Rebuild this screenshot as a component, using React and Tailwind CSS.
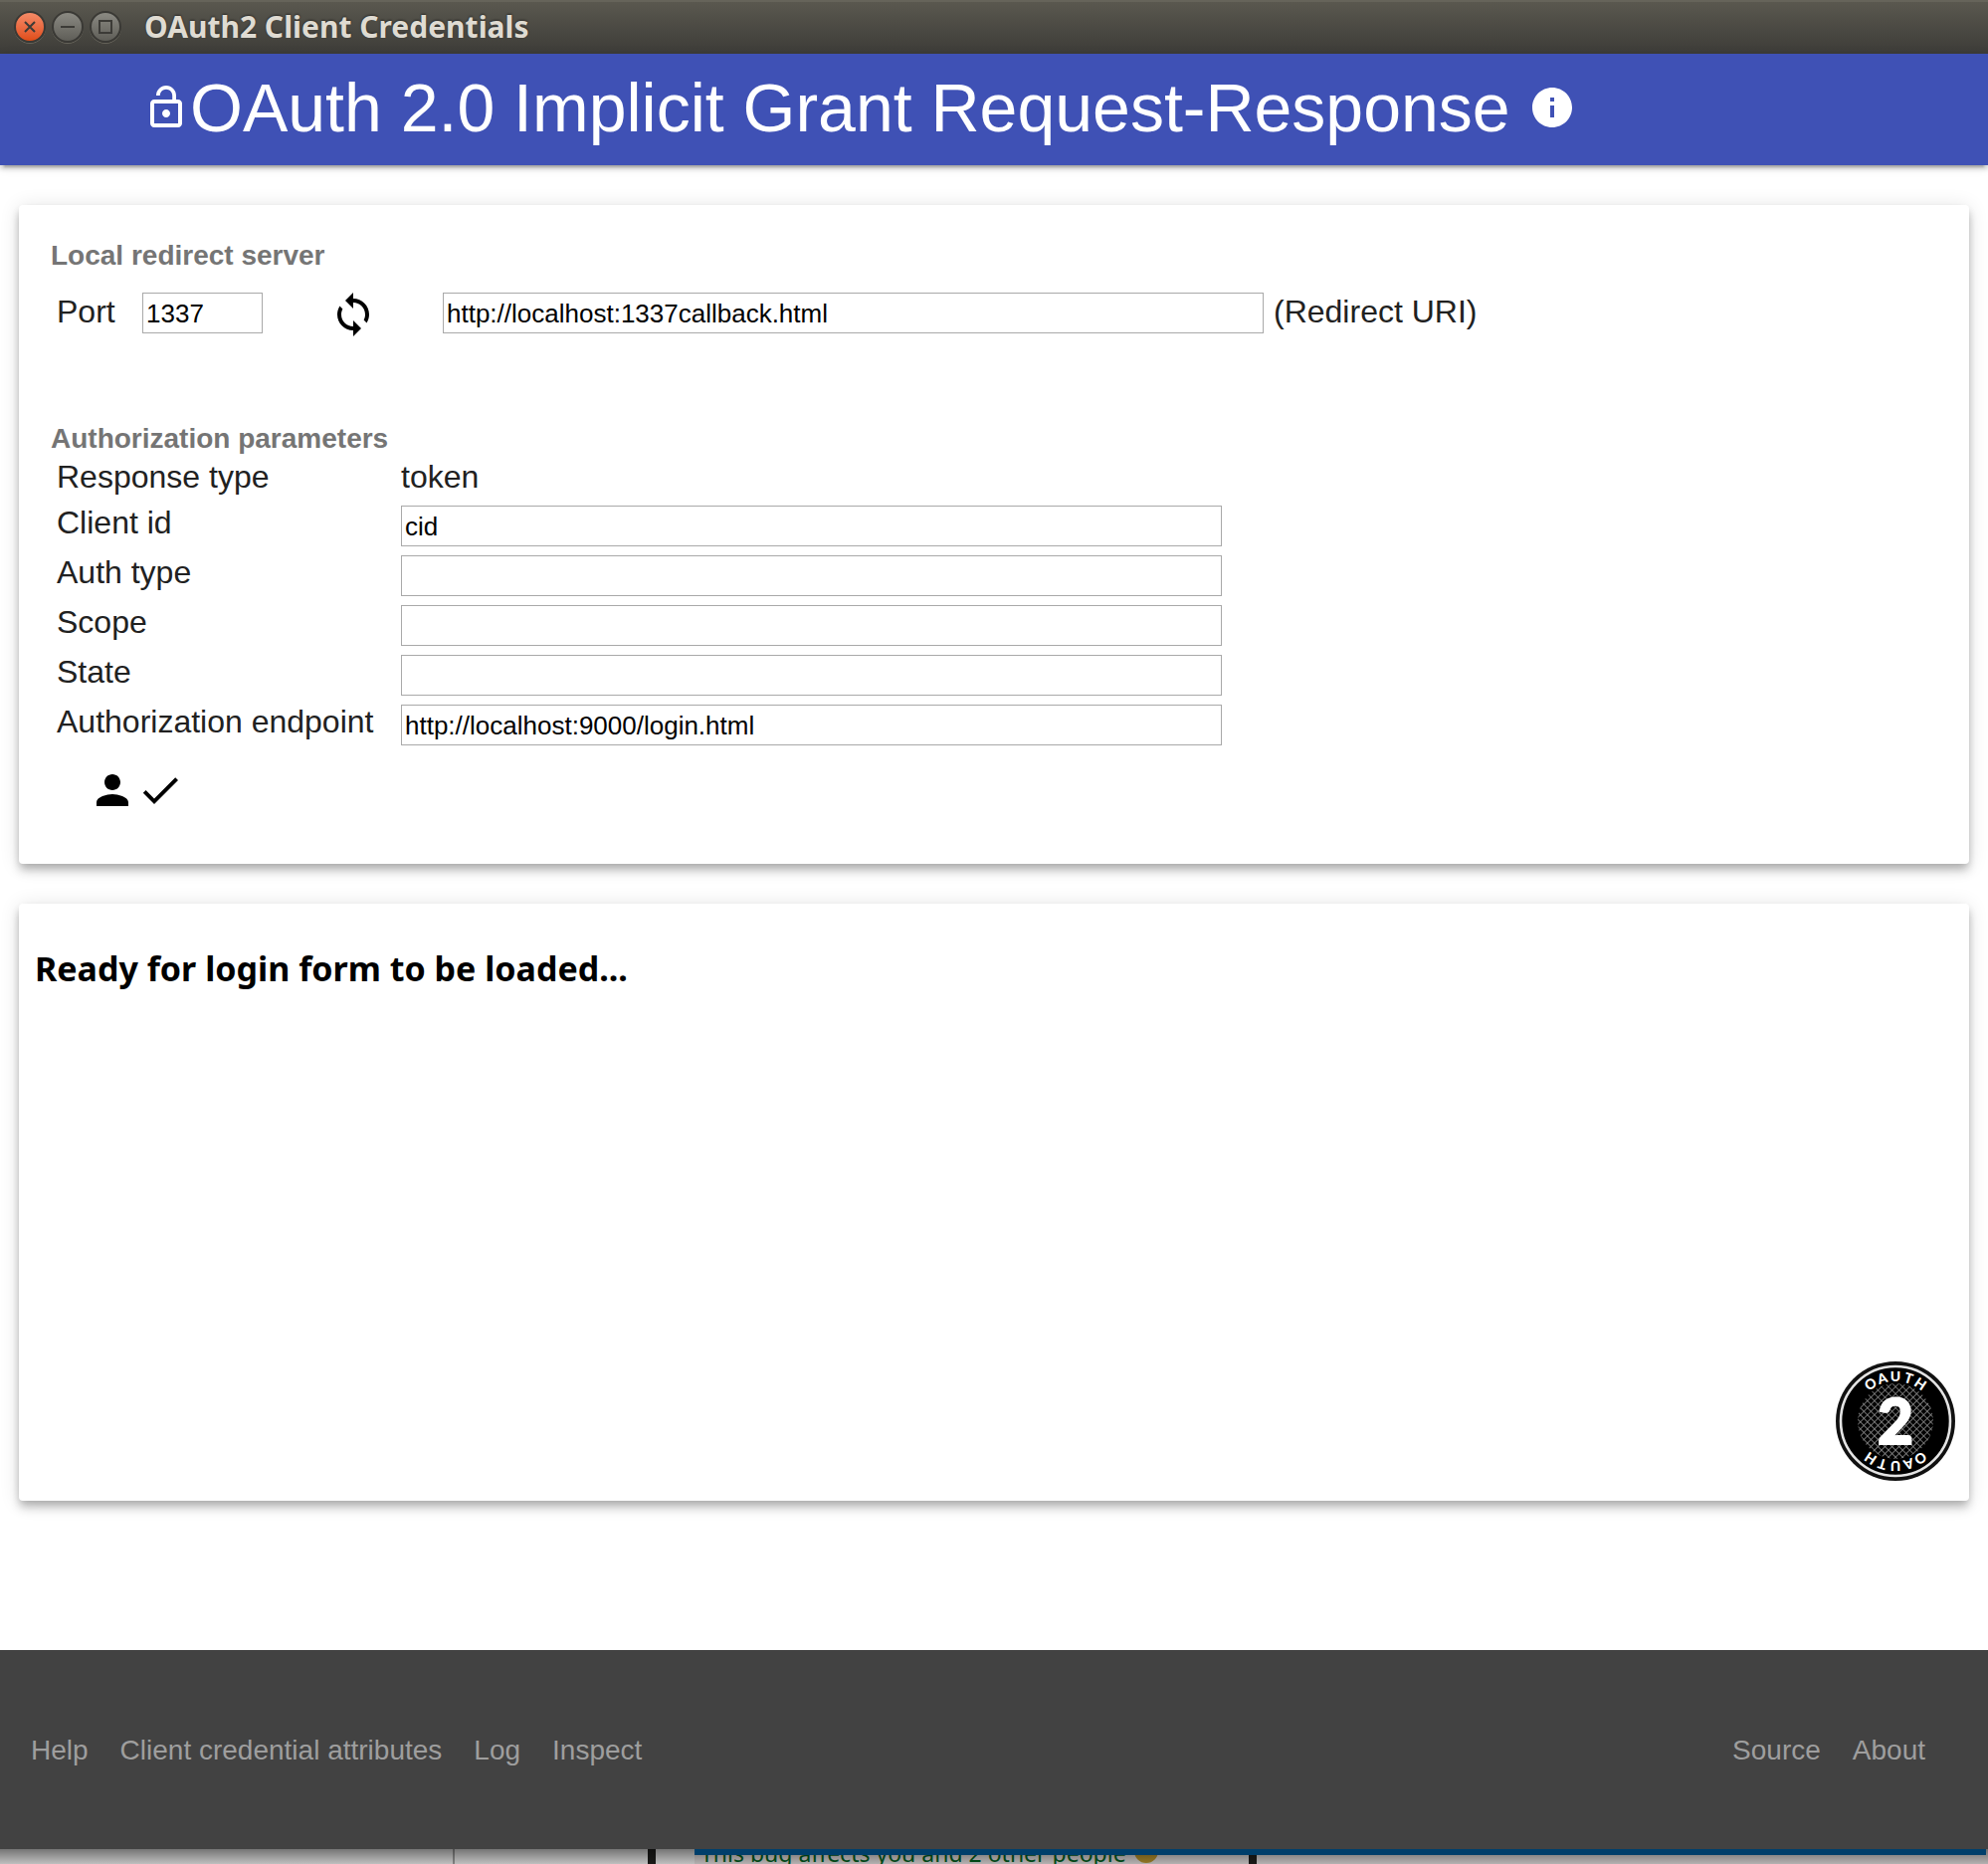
import React from "react";

const PATHS = {
  lockOpen:
    "M12 17c1.1 0 2-.9 2-2s-.9-2-2-2-2 .9-2 2 .9 2 2 2zm6-9H8.9V8h6.2V6c0-1.71-1.39-3.1-3.1-3.1-1.71 0-3.1 1.39-3.1 3.1H7c0-2.76 2.24-5 5-5s5 2.24 5 5v2h1c1.1 0 2 .9 2 2v10c0 1.1-.9 2-2 2H6c-1.1 0-2-.9-2-2V10c0-1.1.9-2 2-2h12zm0 12V10H6v10h12z",
  info: "M12 2C6.48 2 2 6.48 2 12s4.48 10 10 10 10-4.48 10-10S17.52 2 12 2zm1 15h-2v-6h2v6zm0-8h-2V7h2v2z",
  sync: "M12 4V1L8 5l4 4V6c3.31 0 6 2.69 6 6 0 1.01-.25 1.97-.7 2.8l1.46 1.46C19.54 15.03 20 13.57 20 12c0-4.42-3.58-8-8-8zm0 14c-3.31 0-6-2.69-6-6 0-1.01.25-1.97.7-2.8L5.24 7.74C4.46 8.97 4 10.43 4 12c0 4.42 3.58 8 8 8v3l4-4-4-4v3z",
  person:
    "M12 12c2.21 0 4-1.79 4-4s-1.79-4-4-4-4 1.79-4 4 1.79 4 4 4zm0 2c-2.67 0-8 1.34-8 4v2h16v-2c0-2.66-5.33-4-8-4z",
  done: "M9 16.2L4.8 12l-1.4 1.4L9 19 21 7l-1.4-1.4L9 16.2z",
};

function Icon({ name }) {
  return (
    <svg viewBox="0 0 24 24" className="size-12 shrink-0 fill-current" aria-hidden="true">
      <path d={PATHS[name]} />
    </svg>
  );
}

function IconButton({ name, label }) {
  return (
    <button type="button" aria-label={label} className="size-12 shrink-0">
      <Icon name={name} />
    </button>
  );
}

function WindowButton({ label, close, children }) {
  return (
    <button
      type="button"
      aria-label={label}
      className={
        "size-8 rounded-full border-2 border-[#3a3935] shadow-[0_1px_0_#66645a] " +
        (close ? "bg-linear-to-b from-[#f58a66] to-[#df4c16]" : "bg-linear-to-b from-[#8b8a83] to-[#5f5e58]")
      }
    >
      <svg viewBox="0 0 28 28" className="size-7 fill-none stroke-[#3c3b37] stroke-2" aria-hidden="true">
        {children}
      </svg>
    </button>
  );
}

function TitleBar() {
  return (
    <div className="flex h-[54px] items-center gap-[23px] border-t-2 border-[#66645a] bg-linear-to-b from-[#5a584f] to-[#3d3c38] pb-[2px] pl-[14px]">
      <div className="flex gap-[6px]">
        <WindowButton label="Close" close>
          <path d="M9 9l10 10M19 9L9 19" />
        </WindowButton>
        <WindowButton label="Minimize">
          <path d="M7 14h14" />
        </WindowButton>
        <WindowButton label="Maximize">
          <path d="M8 8h12v12H8z" />
        </WindowButton>
      </div>
      <span className="font-['Noto_Sans',sans-serif] text-[30px] leading-9 font-bold text-[#dfdbd2] [text-shadow:0_-1px_2px_#2b2a27]">
        OAuth2 Client Credentials
      </span>
    </div>
  );
}

const inputClass =
  "block h-[41px] border border-[#a9a9a9] bg-white pt-[2px] pl-[3px] text-[26px] leading-8 text-black outline-none";
const cardClass =
  "rounded-[4px] bg-white shadow-[0_8px_10px_0_rgba(0,0,0,0.14),0_2px_20px_0_rgba(0,0,0,0.12),0_4px_8px_-2px_rgba(0,0,0,0.2)]";

function Field({ id, label, value }) {
  return (
    <>
      <label htmlFor={id} className="h-[50px] leading-9">
        {label}
      </label>
      <div className="h-[50px] pt-px">
        <input id={id} type="text" defaultValue={value} className={inputClass + " w-full"} />
      </div>
    </>
  );
}

const LETTERS = [
  ["O", -34],
  ["A", -17],
  ["U", 0],
  ["T", 17],
  ["H", 34],
];

function OAuthBadge() {
  return (
    <svg viewBox="0 0 120 120" className="size-[120px]" role="img" aria-label="OAuth 2">
      <defs>
        <pattern id="mesh" width="5" height="5" patternUnits="userSpaceOnUse" patternTransform="rotate(45)">
          <path d="M0 0H5M0 0V5" stroke="#8f8f8f" strokeWidth="1.6" fill="none" />
        </pattern>
      </defs>
      <circle cx="60" cy="60" r="60" fill="#111" />
      <circle cx="60" cy="60" r="55" fill="#000" stroke="#e4e4e4" strokeWidth="2.6" />
      <circle cx="60" cy="60" r="38" fill="url(#mesh)" />
      {[0, 180].map((turn) => (
        <g key={turn} transform={`rotate(${turn} 60 60)`}>
          {LETTERS.map(([letter, angle]) => (
            <text
              key={letter}
              x="60"
              y="20"
              transform={`rotate(${angle} 60 60)`}
              textAnchor="middle"
              className="fill-white font-['Lato',sans-serif] text-[14px] font-black"
            >
              {letter}
            </text>
          ))}
        </g>
      ))}
      <text
        x="60"
        y="83"
        textAnchor="middle"
        className="fill-white stroke-white stroke-2 font-['Lato',sans-serif] text-[62px] font-black"
      >
        2
      </text>
    </svg>
  );
}

function Backdrop() {
  return (
    <div className="relative flex h-[15px] overflow-hidden text-[#00551b]" aria-hidden="true">
      <div className="w-[455px] bg-[#d4d4d4]" />
      <div className="w-[2px] bg-[#8f8f8f]" />
      <div className="w-[194px] bg-[#d4d4d4]" />
      <div className="w-2 bg-[#1c1c1a]" />
      <div className="w-[39px] bg-[#d4d4d4]" />
      <div className="relative flex-1 overflow-hidden bg-[#c8c4c4]">
        <div className="absolute bottom-[-5px] left-[6px] flex items-center gap-2 whitespace-nowrap font-['Noto_Sans',sans-serif] text-[23px] leading-8">
          This bug affects you and 2 other people
          <span className="mb-1 size-6 rounded-full bg-[#a5852a]" />
        </div>
        <div className="absolute top-[6px] bottom-0 left-[557px] w-2 bg-[#1c1c1a]" />
      </div>
      <div className="absolute inset-0 bg-linear-to-b from-black/45 to-black/10" />
      <div className="absolute top-0 right-[2px] left-[698px] h-[6px] bg-[#003f6b]" />
    </div>
  );
}

export default function App() {
  return (
    <div className="flex min-h-screen flex-col bg-white font-['Liberation_Sans',sans-serif]">
      <TitleBar />
      <header className="z-10 flex h-28 items-center bg-[#3f51b5] pb-1 pl-[143px] text-white shadow-[0_4px_4px_0_rgba(0,0,0,0.14),0_6px_2px_-4px_rgba(0,0,0,0.2),0_2px_10px_0_rgba(0,0,0,0.12)]">
        <Icon name="lockOpen" />
        <h1 className="mr-[18px] text-[68px] leading-[80px]">OAuth 2.0 Implicit Grant Request-Response</h1>
        <IconButton name="info" label="Information" />
      </header>

      <main className="flex-1 px-[19px] pt-10 pb-[150px]">
        <form className={cardClass + " px-8 pt-[33px] pb-[50px] text-[32px] text-[#212121]"}>
          <h2 className="text-[28px] leading-9 font-bold text-[#757575]">Local redirect server</h2>
          <div className="mt-[17px] flex items-start pl-[6px]">
            <label htmlFor="port" className="w-[86px] pt-[3px] leading-9">
              Port
            </label>
            <input id="port" type="text" defaultValue="1337" className={inputClass + " mt-[2px] w-[121px]"} />
            <div className="mr-[66px] ml-[67px] h-12 text-black">
              <IconButton name="sync" label="Refresh redirect URI" />
            </div>
            <input
              id="redirect"
              type="text"
              defaultValue="http://localhost:1337callback.html"
              className={inputClass + " mt-[2px] w-[825px]"}
            />
            <label htmlFor="redirect" className="pt-[3px] pl-[10px] leading-9">
              (Redirect URI)
            </label>
          </div>

          <h2 className="mt-[83px] text-[28px] leading-9 font-bold text-[#757575]">Authorization parameters</h2>
          <div className="mt-[2px] grid grid-cols-[346px_825px] pl-[6px]">
            <div className="h-[46px] leading-9">Response type</div>
            <div className="h-[46px] leading-9">token</div>
            <Field id="client-id" label="Client id" value="cid" />
            <Field id="auth-type" label="Auth type" value="" />
            <Field id="scope" label="Scope" value="" />
            <Field id="state" label="State" value="" />
            <Field id="endpoint" label="Authorization endpoint" value="http://localhost:9000/login.html" />
          </div>
          <div className="mt-[13px] flex pl-[38px] text-black">
            <IconButton name="person" label="Log in" />
            <IconButton name="done" label="Validate" />
          </div>
        </form>

        <section className={cardClass + " relative mt-10 min-h-[600px] px-4 pt-[41px]"}>
          <h2 className="font-['Noto_Sans',sans-serif] text-[34px] leading-12 font-bold text-black">
            Ready for login form to be loaded...
          </h2>
          <button type="button" aria-label="OAuth 2" className="absolute right-[14px] bottom-5 size-[120px]">
            <OAuthBadge />
          </button>
        </section>
      </main>

      <footer className="flex h-[200px] items-center justify-between bg-[#424242] pt-[2px] pr-[63px] pl-[31px] text-[28px] leading-9 text-[#9e9e9e]">
        <nav className="flex gap-8">
          <a href="#help">Help</a>
          <a href="#attributes">Client credential attributes</a>
          <a href="#log">Log</a>
          <a href="#inspect">Inspect</a>
        </nav>
        <nav className="flex gap-8">
          <a href="#source">Source</a>
          <a href="#about">About</a>
        </nav>
      </footer>
      <Backdrop />
    </div>
  );
}
